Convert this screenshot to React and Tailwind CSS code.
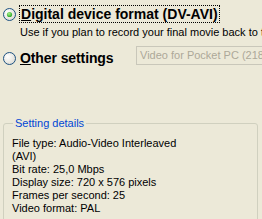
import React from "react";

function Radio({ checked, id }) {
  return (
    <svg width="13" height="13" viewBox="0 0 13 13" className="shrink-0">
      <defs>
        <radialGradient id={`bg-${id}`} cx="0.35" cy="0.35" r="0.8">
          <stop offset="0" stopColor="#ffffff" />
          <stop offset="1" stopColor="#d8d7cf" />
        </radialGradient>
        <radialGradient id={`dot-${id}`} cx="0.4" cy="0.35" r="0.7">
          <stop offset="0" stopColor="#a8f08a" />
          <stop offset="1" stopColor="#21a121" />
        </radialGradient>
      </defs>
      <circle cx="6.5" cy="6.5" r="6" fill={`url(#bg-${id})`} stroke="#1c5180" strokeWidth="1" />
      {checked && <circle cx="6.5" cy="6.5" r="2.6" fill={`url(#dot-${id})`} />}
    </svg>
  );
}

export default function App() {
  const font = { fontFamily: "'Liberation Sans', Arial, sans-serif" };
  return (
    <div className="w-[262px] h-[219px] overflow-hidden bg-[#ece9d8] relative text-black" style={font}>
      <div className="flex items-center pl-[3px] pt-[5px]">
        <Radio checked id="a" />
        <div className="ml-[3px] border border-dotted border-black px-[1px] h-[18px] flex items-center">
          <span className="font-bold text-[14px] leading-none"><span className="underline">D</span>igital device format (DV-AVI)</span>
        </div>
      </div>
      <div className="pl-[20px] mt-[3px] text-[11px] leading-[13px] whitespace-nowrap">
        Use if you plan to record your final movie back to tape.
      </div>
      <div className="flex items-center pl-[3px] mt-[12px] relative">
        <Radio id="b" />
        <span className="ml-[4px] font-bold text-[14px] leading-none tracking-[-0.1px]"><span className="underline">O</span>ther settings</span>
        <div className="absolute left-[136px] top-[-5px] w-[140px] h-[19px] border border-[#c9c7ba] bg-[#ece9d8] text-[#aca899] text-[11px] leading-[17px] pl-[3px] whitespace-nowrap">
          Video for Pocket PC (218 kbps)
        </div>
      </div>
      <fieldset className="absolute left-[3px] top-[117px] w-[255px] h-[120px] border border-[#d0d0bf] rounded-[3px] px-[8px] m-0">
        <legend className="text-[#0046d5] text-[11px] leading-[13px] px-[2px] ml-[1px]">Setting details</legend>
        <div className="text-[11px] leading-[13px] mt-[7px]">
          <div>File type: Audio-Video Interleaved</div>
          <div>(AVI)</div>
          <div>Bit rate: 25,0 Mbps</div>
          <div>Display size: 720 x 576 pixels</div>
          <div>Frames per second: 25</div>
          <div>Video format: PAL</div>
        </div>
      </fieldset>
    </div>
  );
}
